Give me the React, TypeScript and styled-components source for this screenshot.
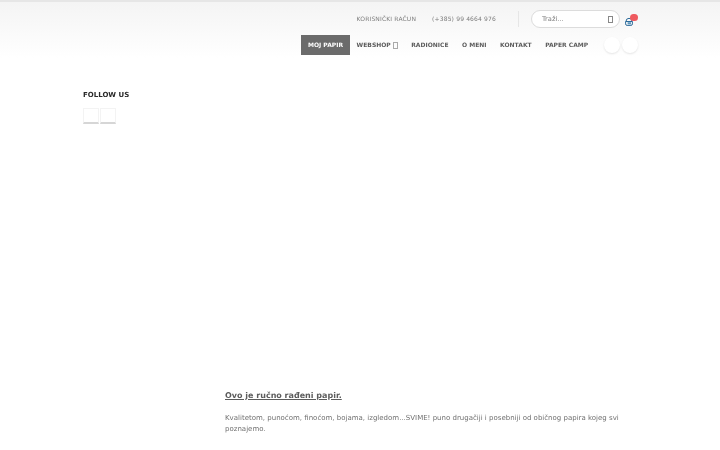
import React from 'react'
import styled, { createGlobalStyle } from 'styled-components'

const GlobalStyle = createGlobalStyle`
  html, body {
    margin: 0;
    padding: 0;
    background: #fff;
    font-family: "DejaVu Sans", sans-serif;
    text-rendering: geometricPrecision;
    overflow: hidden;
  }
`

// the whole reference is slightly soft, so the page gets a very small blur
const Page = styled.div`
  width: 720px;
  height: 450px;
  overflow: hidden;
  filter: blur(0.4px);
`

const Header = styled.header`
  height: 58px;
  box-sizing: border-box;
  border-top: 2px solid #e6e6e6;
  background: linear-gradient(to bottom, #f4f4f4, #ffffff);
  padding-right: 82px;
  display: flex;
  flex-direction: column;
  align-items: flex-end;
`

const TopRow = styled.div`
  height: 33px;
  display: flex;
  align-items: center;
  padding-top: 2px;
  box-sizing: border-box;
`

const TopLink = styled.a<{ $gap: number }>`
  font-size: 6px;
  line-height: 8px;
  padding-top: 1px;
  letter-spacing: 0.15px;
  color: #7c7c7c;
  margin-right: ${p => p.$gap}px;
  white-space: nowrap;
`

const Divider = styled.span`
  width: 1px;
  height: 16px;
  margin-top: -1px;
  background: #e6e6e6;
  margin-right: 12px;
`

const SearchBox = styled.div`
  width: 89px;
  height: 18px;
  box-sizing: border-box;
  border: 1px solid #dcdcdc;
  border-radius: 9px;
  background: #fff;
  padding: 0 6px 0 10px;
  display: flex;
  align-items: center;
  justify-content: space-between;
  margin: -1px 5px 0 0;
`

const SearchText = styled.span`
  font-size: 6.7px;
  color: #808080;
`

const MissingGlyph = styled.span<{ $color: string }>`
  display: inline-block;
  width: 3px;
  height: 5px;
  border: 1px solid ${p => p.$color};
`

const Cart = styled.div`
  position: relative;
  width: 13px;
  height: 14px;
  margin-top: -2px;
  display: flex;
  align-items: flex-end;
`

const CartBadge = styled.span`
  position: absolute;
  top: 2px;
  left: 5px;
  width: 7.5px;
  height: 7.5px;
  border-radius: 50%;
  background: #ef5a5f;
`

const NavRow = styled.nav`
  display: flex;
  align-items: center;
  height: 20px;
`

const NavItem = styled.a<{ $active?: boolean }>`
  height: 20px;
  display: flex;
  align-items: center;
  gap: 2px;
  padding: 0 6.75px;
  font-size: 6px;
  font-weight: 700;
  white-space: nowrap;
  color: ${p => (p.$active ? '#fff' : '#5c5c5c')};
  background: ${p => (p.$active ? '#6b6b6b' : 'transparent')};
`

const RoundGroup = styled.div`
  display: flex;
  gap: 2px;
  margin-left: 9px;
`

const RoundButton = styled.span`
  width: 16px;
  height: 16px;
  border-radius: 50%;
  background: #fff;
  box-shadow: 0 1px 2px rgba(0, 0, 0, 0.1);
`

const Body = styled.main`
  display: flex;
  padding: 0 0 0 83px;
`

const Sidebar = styled.aside`
  width: 142px;
  flex-shrink: 0;
  padding-top: 32px;
`

const SideTitle = styled.h4`
  margin: 0 0 8px;
  font-size: 7px;
  line-height: 10px;
  font-weight: 700;
  color: #2a2a2a;
`

const SocialRow = styled.div`
  display: flex;
  gap: 1px;
`

const SocialBox = styled.span`
  width: 16px;
  height: 16px;
  box-sizing: border-box;
  background: #fff;
  border: 1px solid #f3f3f3;
  border-bottom: 2px solid #d6d6d6;
`

const Content = styled.section`
  width: 396px;
  padding-top: 332px;
`

const Lead = styled.p`
  margin: 0 0 12px;
  font-size: 8px;
  line-height: 11px;
  font-weight: 700;
  text-decoration: underline;
  color: #5c5c5c;
`

const Paragraph = styled.p`
  margin: 0;
  font-size: 7px;
  line-height: 11px;
  color: #707070;
`

export default function App() {
  return (
    <Page>
      <GlobalStyle />
      <Header>
        <TopRow>
          <TopLink $gap={16}>KORISNIČKI RAČUN</TopLink>
          <TopLink $gap={22}>(+385) 99 4664 976</TopLink>
          <Divider />
          <SearchBox>
            <SearchText>Traži...</SearchText>
            <MissingGlyph $color="#888" />
          </SearchBox>
          <Cart>
            <svg width="8" height="9" viewBox="0 0 8 9">
              <path d="M1 4.5a3 3.2 0 0 1 6 0" fill="none" stroke="#2b6a9a" strokeWidth="1" />
              <path d="M.6 4.5h6.8v2.4A1.5 1.5 0 0 1 5.9 8.4H2.1A1.5 1.5 0 0 1 .6 6.9z" fill="none" stroke="#2b6a9a" strokeWidth="1" />
              <path d="M2.6 5.2h3.4v2.2H2.6z" fill="#5f97bf" />
            </svg>
            <CartBadge />
          </Cart>
        </TopRow>
        <NavRow>
          <NavItem $active>MOJ PAPIR</NavItem>
          <NavItem>WEBSHOP <MissingGlyph $color="#aaa" /></NavItem>
          <NavItem>RADIONICE</NavItem>
          <NavItem>O MENI</NavItem>
          <NavItem>KONTAKT</NavItem>
          <NavItem>PAPER CAMP</NavItem>
          <RoundGroup>
            <RoundButton />
            <RoundButton />
          </RoundGroup>
        </NavRow>
      </Header>
      <Body>
        <Sidebar>
          <SideTitle>FOLLOW US</SideTitle>
          <SocialRow>
            <SocialBox />
            <SocialBox />
          </SocialRow>
        </Sidebar>
        <Content>
          <Lead>Ovo je ručno rađeni papir.</Lead>
          <Paragraph>
            Kvalitetom, punoćom, finoćom, bojama, izgledom...SVIME! puno drugačiji i posebniji od običnog papira kojeg svi poznajemo.
          </Paragraph>
        </Content>
      </Body>
    </Page>
  )
}
